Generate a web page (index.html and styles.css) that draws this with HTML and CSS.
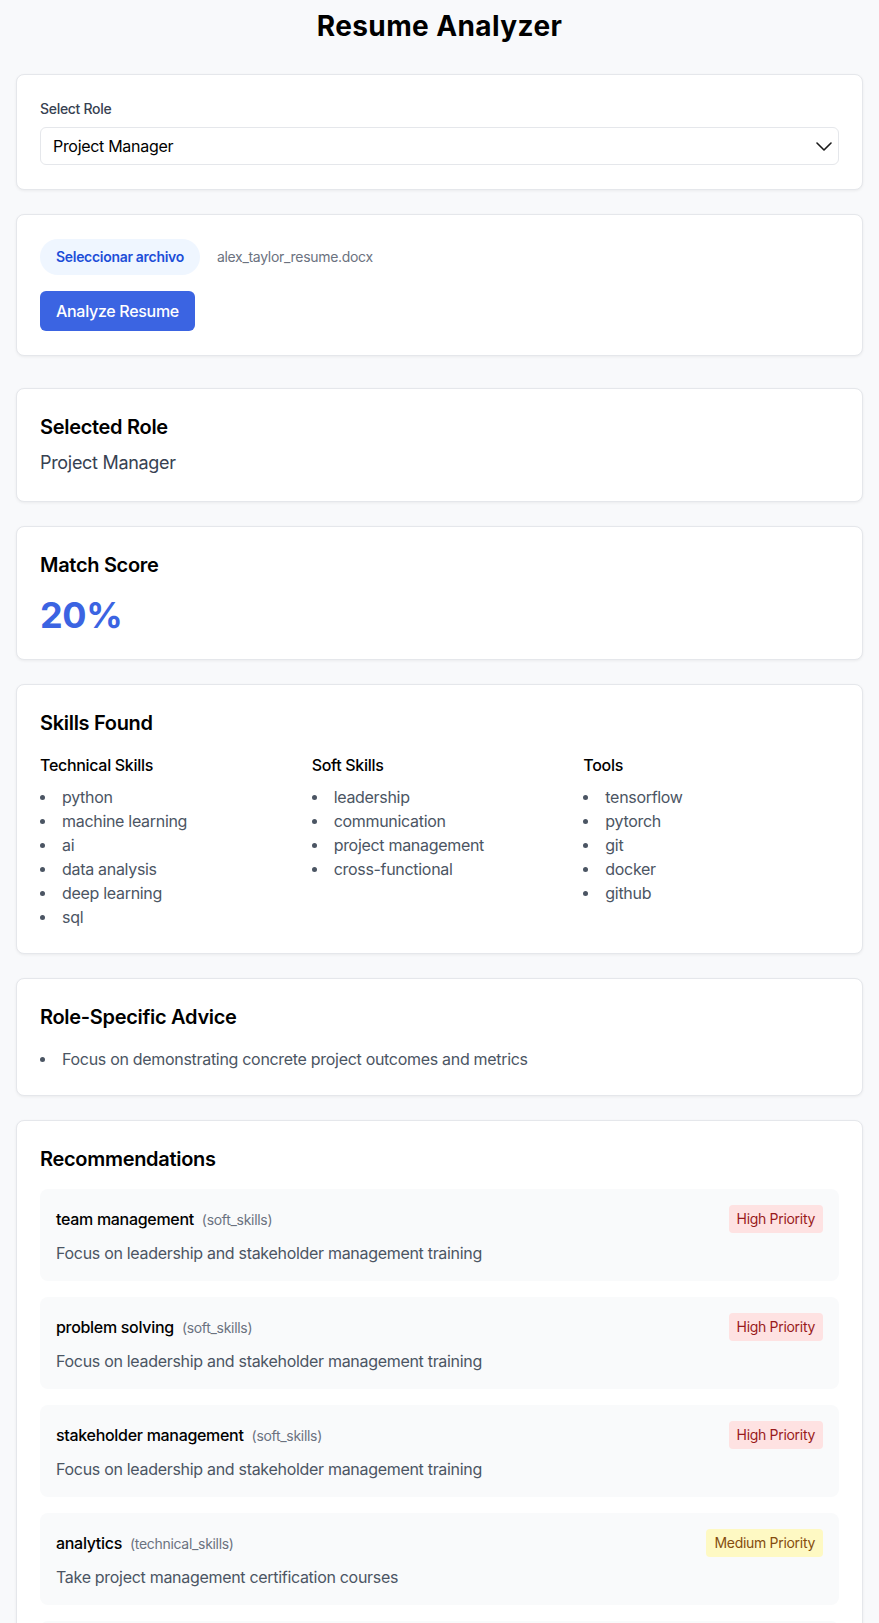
FILE: index.html
```html
<!DOCTYPE html>
<html lang="en">
<head>
<meta charset="utf-8">
<title>Resume Analyzer</title>
<link rel="stylesheet" href="styles.css">
</head>
<body>
<main class="page">
  <h1 class="title">Resume Analyzer</h1>

  <form class="upload-form">
    <section class="card">
      <label class="field-label" for="role">Select Role</label>
      <div class="select-wrap">
        <select id="role" class="select">
          <option>Project Manager</option>
        </select>
        <svg class="chevron" width="16" height="9" viewBox="0 0 16 9" aria-hidden="true"><polyline points="1,1 8,8 15,1" fill="none" stroke="#1a1a1a" stroke-width="1.6" stroke-linecap="round" stroke-linejoin="round"/></svg>
      </div>
    </section>

    <section class="card">
      <div class="file-row">
        <span class="file-btn">Seleccionar archivo</span>
        <span class="file-name">alex_taylor_resume.docx</span>
      </div>
      <button type="button" class="primary-btn">Analyze Resume</button>
    </section>
  </form>

  <section class="card">
    <h2 class="card-title tight">Selected Role</h2>
    <p class="role-text">Project Manager</p>
  </section>

  <section class="card">
    <h2 class="card-title">Match Score</h2>
    <p class="score">20%</p>
  </section>

  <section class="card">
    <h2 class="card-title">Skills Found</h2>
    <div class="skills-grid">
      <div class="skill-col">
        <h3 class="col-title">Technical Skills</h3>
        <ul class="bullets">
          <li>python</li>
          <li>machine learning</li>
          <li>ai</li>
          <li>data analysis</li>
          <li>deep learning</li>
          <li>sql</li>
        </ul>
      </div>
      <div class="skill-col">
        <h3 class="col-title">Soft Skills</h3>
        <ul class="bullets">
          <li>leadership</li>
          <li>communication</li>
          <li>project management</li>
          <li>cross-functional</li>
        </ul>
      </div>
      <div class="skill-col">
        <h3 class="col-title">Tools</h3>
        <ul class="bullets">
          <li>tensorflow</li>
          <li>pytorch</li>
          <li>git</li>
          <li>docker</li>
          <li>github</li>
        </ul>
      </div>
    </div>
  </section>

  <section class="card">
    <h2 class="card-title">Role-Specific Advice</h2>
    <ul class="bullets">
      <li>Focus on demonstrating concrete project outcomes and metrics</li>
    </ul>
  </section>

  <section class="card">
    <h2 class="card-title">Recommendations</h2>
    <div class="rec-list">
      <div class="rec">
        <div class="rec-head">
          <div class="rec-name"><span class="rec-skill">team management</span><span class="rec-cat">(soft_skills)</span></div>
          <span class="badge high">High Priority</span>
        </div>
        <p class="rec-desc">Focus on leadership and stakeholder management training</p>
      </div>
      <div class="rec">
        <div class="rec-head">
          <div class="rec-name"><span class="rec-skill">problem solving</span><span class="rec-cat">(soft_skills)</span></div>
          <span class="badge high">High Priority</span>
        </div>
        <p class="rec-desc">Focus on leadership and stakeholder management training</p>
      </div>
      <div class="rec">
        <div class="rec-head">
          <div class="rec-name"><span class="rec-skill">stakeholder management</span><span class="rec-cat">(soft_skills)</span></div>
          <span class="badge high">High Priority</span>
        </div>
        <p class="rec-desc">Focus on leadership and stakeholder management training</p>
      </div>
      <div class="rec">
        <div class="rec-head">
          <div class="rec-name"><span class="rec-skill">analytics</span><span class="rec-cat">(technical_skills)</span></div>
          <span class="badge medium">Medium Priority</span>
        </div>
        <p class="rec-desc">Take project management certification courses</p>
      </div>
      <div class="rec">
        <div class="rec-head">
          <div class="rec-name"><span class="rec-skill">budgeting</span><span class="rec-cat">(technical_skills)</span></div>
          <span class="badge medium">Medium Priority</span>
        </div>
        <p class="rec-desc">Take project management certification courses</p>
      </div>
    </div>
  </section>
</main>
</body>
</html>
```

FILE: styles.css
```css
* { box-sizing: border-box; }

html, body {
  margin: 0;
  padding: 0;
}

body {
  background: #f8f9fb;
  font-family: Inter, "Noto Sans", "Liberation Sans", sans-serif;
  color: #111827;
  letter-spacing: -0.019em;
  -webkit-font-smoothing: antialiased;
}

.page {
  padding: 8px 16px 40px;
}

.title {
  margin: 0 0 30px;
  text-align: center;
  font-size: 28px;
  line-height: 36px;
  font-weight: 700;
  color: #000;
  letter-spacing: 0.4px;
}

.upload-form {
  margin: 0 0 32px;
  display: flex;
  flex-direction: column;
  gap: 24px;
}

.card {
  background: #fff;
  border: 1px solid #e5e7eb;
  border-radius: 8px;
  box-shadow: 0 1px 3px rgba(0, 0, 0, 0.06);
  padding: 24px 23px;
  margin-bottom: 24px;
}

.upload-form .card { margin-bottom: 0; }

.field-label {
  display: block;
  font-size: 14px;
  line-height: 20px;
  font-weight: 500;
  color: #374151;
  margin-bottom: 8px;
}

.select-wrap {
  position: relative;
}

.select {
  display: block;
  width: 100%;
  height: 38px;
  -webkit-appearance: none;
  appearance: none;
  background: #fff;
  border: 1px solid #e5e7eb;
  border-radius: 6px;
  padding: 0 40px 0 12px;
  font-family: inherit;
  font-size: 16px;
  letter-spacing: inherit;
  color: #000;
}

.chevron {
  position: absolute;
  right: 7px;
  top: 15px;
  pointer-events: none;
}

.file-row {
  display: flex;
  align-items: center;
  gap: 17px;
  margin-bottom: 16px;
}

.file-btn {
  display: inline-block;
  background: #eff6ff;
  color: #1d4ed8;
  font-size: 14px;
  line-height: 20px;
  font-weight: 600;
  padding: 8px 16px;
  border-radius: 999px;
}

.file-name {
  font-size: 14px;
  line-height: 20px;
  color: #6b7280;
}

.primary-btn {
  display: block;
  background: #3b64e2;
  color: #fff;
  border: 0;
  border-radius: 6px;
  font-family: inherit;
  font-size: 16px;
  letter-spacing: inherit;
  line-height: 24px;
  font-weight: 500;
  padding: 8px 16px;
}

.card-title {
  margin: 0 0 16px;
  font-size: 20px;
  line-height: 28px;
  font-weight: 600;
  color: #000;
}

.card-title.tight { margin-bottom: 8px; }

.role-text {
  margin: 0;
  font-size: 18px;
  line-height: 28px;
  color: #374151;
}

.score {
  margin: 0;
  font-size: 36px;
  line-height: 40px;
  font-weight: 700;
  color: #3b64e2;
}

.skills-grid {
  display: grid;
  grid-template-columns: repeat(3, 1fr);
  gap: 16px;
}

.col-title {
  margin: 0 0 8px;
  font-size: 16px;
  line-height: 24px;
  font-weight: 500;
  color: #000;
}

.bullets {
  margin: 0;
  padding: 0;
  list-style: none;
  font-size: 16px;
  line-height: 24px;
  color: #4b5563;
}

.bullets li {
  display: flex;
  align-items: center;
}

.bullets li::before {
  content: "";
  flex: none;
  width: 5px;
  height: 5px;
  border-radius: 50%;
  background: #4b5563;
  margin: 0 17px 0 0;
}

.rec-list {
  display: flex;
  flex-direction: column;
  gap: 16px;
}

.rec {
  background: #f9fafb;
  border-radius: 8px;
  padding: 16px;
}

.rec-head {
  display: flex;
  justify-content: space-between;
  align-items: center;
  margin-bottom: 8px;
}

.rec-name {
  display: flex;
  align-items: baseline;
  gap: 8px;
}

.rec-skill {
  font-size: 16px;
  line-height: 24px;
  font-weight: 500;
  color: #000;
}

.rec-cat {
  font-size: 14px;
  line-height: 20px;
  color: #6b7280;
}

.badge {
  font-size: 14px;
  line-height: 20px;
  padding: 4px 8px;
  border-radius: 4px;
}

.badge.high {
  background: #fee2e2;
  color: #991b1b;
}

.badge.medium {
  background: #fef9c3;
  color: #854d0e;
}

.rec-desc {
  margin: 0;
  font-size: 16px;
  line-height: 24px;
  color: #4b5563;
}
```
